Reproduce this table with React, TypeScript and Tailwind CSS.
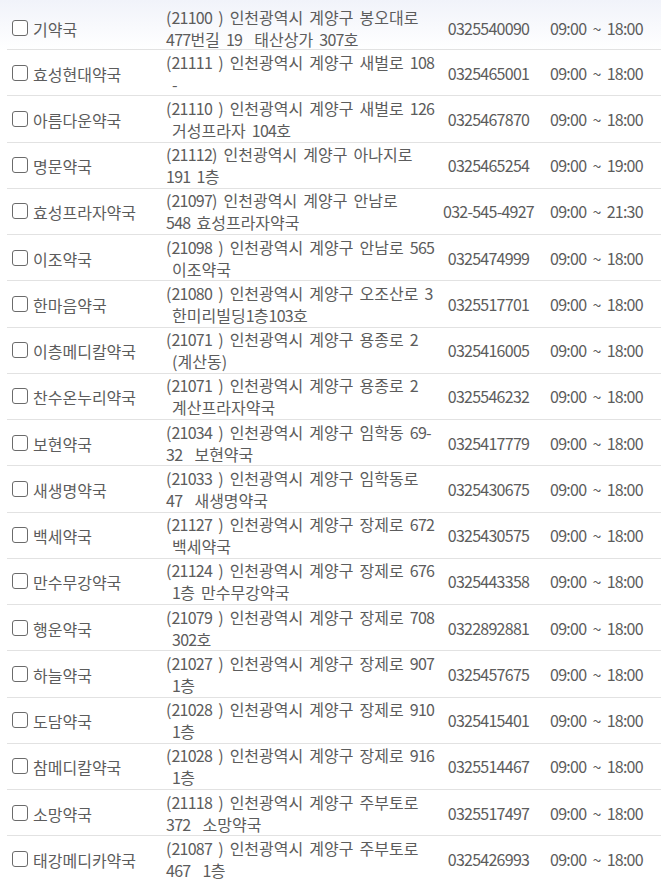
type Pharmacy = {
    name: string
    addr1: string
    addr2: string
    phone: string
    hours: string
}

const pharmacies: Pharmacy[] = [
    { name: "기약국", addr1: "(21100 ) 인천광역시 계양구 봉오대로", addr2: "477번길 19  태산상가 307호", phone: "0325540090", hours: "09:00 ~ 18:00" },
    { name: "효성현대약국", addr1: "(21111 ) 인천광역시 계양구 새벌로 108", addr2: " -", phone: "0325465001", hours: "09:00 ~ 18:00" },
    { name: "아름다운약국", addr1: "(21110 ) 인천광역시 계양구 새벌로 126", addr2: " 거성프라자 104호", phone: "0325467870", hours: "09:00 ~ 18:00" },
    { name: "명문약국", addr1: "(21112) 인천광역시 계양구 아나지로", addr2: "191 1층", phone: "0325465254", hours: "09:00 ~ 19:00" },
    { name: "효성프라자약국", addr1: "(21097) 인천광역시 계양구 안남로", addr2: "548 효성프라자약국", phone: "032-545-4927", hours: "09:00 ~ 21:30" },
    { name: "이조약국", addr1: "(21098 ) 인천광역시 계양구 안남로 565", addr2: " 이조약국", phone: "0325474999", hours: "09:00 ~ 18:00" },
    { name: "한마음약국", addr1: "(21080 ) 인천광역시 계양구 오조산로 3", addr2: " 한미리빌딩1층103호", phone: "0325517701", hours: "09:00 ~ 18:00" },
    { name: "이층메디칼약국", addr1: "(21071 ) 인천광역시 계양구 용종로 2", addr2: " (계산동)", phone: "0325416005", hours: "09:00 ~ 18:00" },
    { name: "찬수온누리약국", addr1: "(21071 ) 인천광역시 계양구 용종로 2", addr2: " 계산프라자약국", phone: "0325546232", hours: "09:00 ~ 18:00" },
    { name: "보현약국", addr1: "(21034 ) 인천광역시 계양구 임학동 69-", addr2: "32  보현약국", phone: "0325417779", hours: "09:00 ~ 18:00" },
    { name: "새생명약국", addr1: "(21033 ) 인천광역시 계양구 임학동로", addr2: "47  새생명약국", phone: "0325430675", hours: "09:00 ~ 18:00" },
    { name: "백세약국", addr1: "(21127 ) 인천광역시 계양구 장제로 672", addr2: " 백세약국", phone: "0325430575", hours: "09:00 ~ 18:00" },
    { name: "만수무강약국", addr1: "(21124 ) 인천광역시 계양구 장제로 676", addr2: " 1층 만수무강약국", phone: "0325443358", hours: "09:00 ~ 18:00" },
    { name: "행운약국", addr1: "(21079 ) 인천광역시 계양구 장제로 708", addr2: " 302호", phone: "0322892881", hours: "09:00 ~ 18:00" },
    { name: "하늘약국", addr1: "(21027 ) 인천광역시 계양구 장제로 907", addr2: " 1층", phone: "0325457675", hours: "09:00 ~ 18:00" },
    { name: "도담약국", addr1: "(21028 ) 인천광역시 계양구 장제로 910", addr2: " 1층", phone: "0325415401", hours: "09:00 ~ 18:00" },
    { name: "참메디칼약국", addr1: "(21028 ) 인천광역시 계양구 장제로 916", addr2: " 1층", phone: "0325514467", hours: "09:00 ~ 18:00" },
    { name: "소망약국", addr1: "(21118 ) 인천광역시 계양구 주부토로", addr2: "372  소망약국", phone: "0325517497", hours: "09:00 ~ 18:00" },
    { name: "태강메디카약국", addr1: "(21087 ) 인천광역시 계양구 주부토로", addr2: "467  1층", phone: "0325426993", hours: "09:00 ~ 18:00" },
]

// digits in the original font are narrow, so tighten number runs a bit
function Txt({ text }: { text: string }) {
    return (
        <>
            {text.split(/([0-9:~\-]+)/).map((part, i) =>
                /^[0-9:~\-]+$/.test(part)
                    ? <span key={i} className="tracking-[-0.75px]">{part}</span>
                    : <span key={i}>{part}</span>
            )}
        </>
    )
}

function Row({ p, first }: { p: Pharmacy; first: boolean }) {
    return (
        <div className={first
            ? "h-[50px] pt-[6px] flex items-center bg-gradient-to-b from-[#f1f3fa] to-white"
            : "h-[46.25px] flex items-center"}>
            <div className="ml-[7px] flex-1 h-full flex items-center border-b border-[#e2e2e2]">
                <label className="w-[159px] pl-[5px] flex items-center gap-[5px]">
                    <span className="w-[16px] h-[16px] rounded-[3px] border-[1.5px] border-[#6b6b6b] bg-white shrink-0" />
                    <span className="mt-[2px]">{p.name}</span>
                </label>
                <div className="w-[271px] leading-[22px] whitespace-pre">
                    <div><Txt text={p.addr1} /></div>
                    <div><Txt text={p.addr2} /></div>
                </div>
                <div className="w-[103px] text-center whitespace-nowrap"><Txt text={p.phone} /></div>
                <div className="w-[113px] text-center whitespace-pre"><Txt text={p.hours} /></div>
            </div>
        </div>
    )
}

export default function App() {
    return (
        <div className="w-[661px] h-[881px] overflow-hidden bg-white text-[#5c5c5c] text-[16px] [word-spacing:2.5px] font-['Noto_Sans_CJK_KR','Noto_Sans',sans-serif]">
            {pharmacies.map((p, i) => (
                <Row key={i} p={p} first={i === 0} />
            ))}
        </div>
    )
}
